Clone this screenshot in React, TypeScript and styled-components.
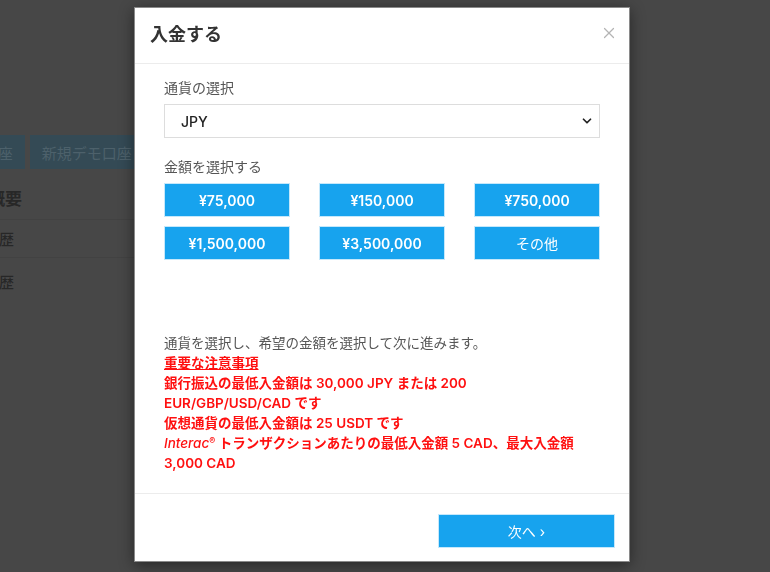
import * as React from "react";
import styled, { createGlobalStyle } from "styled-components";
import { X, ChevronDown } from "lucide-react";

const GlobalStyle = createGlobalStyle`
  html, body {
    margin: 0;
    padding: 0;
    background: #474747;
    font-family: "Inter", "Noto Sans CJK JP", sans-serif;
  }
  * {
    box-sizing: border-box;
  }
`;

const amounts = ["¥75,000", "¥150,000", "¥750,000", "¥1,500,000", "¥3,500,000"];

/* dimmed page behind the dialog */
const Page = styled.div`
  height: 572px;
  overflow: hidden;
  padding-top: 135px;
  margin-left: -104px;
  color: #272727;
`;

const TabRow = styled.div`
  display: flex;
  gap: 5px;
`;

const Tab = styled.div`
  height: 34px;
  padding: 0 12px;
  display: flex;
  align-items: center;
  background: #344a55;
  color: #4d616b;
  font-size: 15px;
`;

const NavList = styled.div`
  width: 260px;
  padding-left: 58px;
`;

const NavItem = styled.div<{ $h: number; $bold?: boolean }>`
  height: ${p => p.$h}px;
  display: flex;
  align-items: center;
  border-bottom: 1px solid #424242;
  font-size: ${p => (p.$bold ? "17px" : "15px")};
  font-weight: ${p => (p.$bold ? 700 : 500)};
  padding-top: ${p => (p.$bold ? "6px" : "0")};
  &:last-child {
    border-bottom: none;
  }
`;

/* dialog */
const Modal = styled.div`
  position: fixed;
  top: 7px;
  left: 134px;
  width: 496px;
  background: #fff;
  border: 1px solid #8a8a8a;
  box-shadow: 0 3px 14px rgba(0, 0, 0, 0.45);
`;

const Header = styled.div`
  height: 56px;
  display: flex;
  align-items: center;
  justify-content: space-between;
  padding: 0 11px 5px 15px;
  border-bottom: 1px solid #ececec;
`;

const Title = styled.h2`
  margin: 0;
  font-size: 18px;
  font-weight: 700;
  color: #333;
`;

const Close = styled.button`
  border: none;
  background: none;
  padding: 0;
  display: flex;
  color: #b4b4b4;
  cursor: pointer;
`;

const Body = styled.div`
  padding: 14px 29px 20px 29px;
`;

const Label = styled.div`
  font-size: 14px;
  line-height: 20px;
  color: #555;
  margin-bottom: 6px;
`;

const SelectWrap = styled.div`
  position: relative;
  margin-bottom: 19px;
`;

const Select = styled.select`
  width: 100%;
  height: 34px;
  appearance: none;
  border: 1px solid #ddd;
  background: #fff;
  padding: 0 16px;
  font-family: inherit;
  font-size: 14px;
  font-weight: 500;
  color: #222;
`;

const Chevron = styled.span`
  position: absolute;
  right: 6px;
  top: 10px;
  display: flex;
  color: #222;
  pointer-events: none;
`;

const AmountGrid = styled.div`
  display: grid;
  grid-template-columns: repeat(3, 126px);
  justify-content: space-between;
  row-gap: 9px;
`;

const AmountButton = styled.button<{ $plain?: boolean }>`
  height: 34px;
  border: 1px solid #c5e8fb;
  background: #17a3ee;
  color: #fff;
  font-family: inherit;
  font-size: 14px;
  font-weight: ${p => (p.$plain ? 400 : 600)};
  cursor: pointer;
`;

const Notes = styled.div`
  margin-top: 73px;
  font-size: 13.5px;
  line-height: 20px;
  color: #555;
`;

const Warn = styled.div<{ $underline?: boolean }>`
  color: #ff1010;
  font-weight: 600;
  text-decoration: ${p => (p.$underline ? "underline" : "none")};
  & em {
    font-weight: 500;
  }
  & sup {
    font-size: 9px;
    line-height: 0;
    vertical-align: 4px;
  }
`;

const Footer = styled.div`
  display: flex;
  justify-content: flex-end;
  padding: 20px 14px 13px;
  border-top: 1px solid #ececec;
`;

const NextButton = styled.button`
  width: 177px;
  height: 34px;
  border: 1px solid #c5e8fb;
  background: #17a3ee;
  color: #fff;
  font-family: inherit;
  font-size: 14px;
  cursor: pointer;
`;

export default function App() {
  return (
    <>
      <GlobalStyle />
      <Page>
        <TabRow>
          <Tab>新規リアル口座</Tab>
          <Tab>新規デモ口座</Tab>
        </TabRow>
        <NavList>
          <NavItem $h={51} $bold>口座概要</NavItem>
          <NavItem $h={38}>取引履歴</NavItem>
          <NavItem $h={46}>出金履歴</NavItem>
        </NavList>
      </Page>
      <Modal>
        <Header>
          <Title>入金する</Title>
          <Close aria-label="close">
            <X size={18} strokeWidth={1.6} />
          </Close>
        </Header>
        <Body>
          <Label>通貨の選択</Label>
          <SelectWrap>
            <Select defaultValue="JPY">
              <option>JPY</option>
              <option>USD</option>
              <option>EUR</option>
            </Select>
            <Chevron>
              <ChevronDown size={14} strokeWidth={3} />
            </Chevron>
          </SelectWrap>
          <Label>金額を選択する</Label>
          <AmountGrid>
            {amounts.map(a => (
              <AmountButton key={a}>{a}</AmountButton>
            ))}
            <AmountButton $plain>その他</AmountButton>
          </AmountGrid>
          <Notes>
            通貨を選択し、希望の金額を選択して次に進みます。
            <Warn $underline>重要な注意事項</Warn>
            <Warn>
              銀行振込の最低入金額は 30,000 JPY または 200
              <br />
              EUR/GBP/USD/CAD です
            </Warn>
            <Warn>仮想通貨の最低入金額は 25 USDT です</Warn>
            <Warn>
              <em>Interac</em>
              <sup>®</sup> トランザクションあたりの最低入金額 5 CAD、最大入金額
              <br />
              3,000 CAD
            </Warn>
          </Notes>
        </Body>
        <Footer>
          <NextButton>次へ ›</NextButton>
        </Footer>
      </Modal>
    </>
  );
}
